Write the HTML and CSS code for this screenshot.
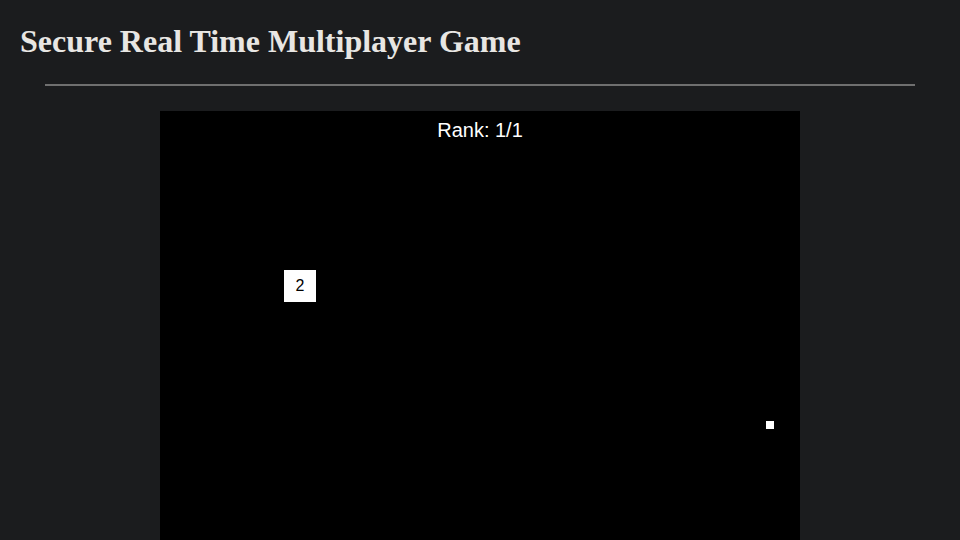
FILE: index.html
```html
<!DOCTYPE html>
<html lang="en">
<head>
<meta charset="utf-8">
<title>Secure Real Time Multiplayer Game</title>
<link rel="stylesheet" href="styles.css">
</head>
<body>
  <h1 class="title">Secure Real Time Multiplayer Game</h1>
  <hr class="divider">
  <main class="game">
    <div class="rank">Rank: 1/1</div>
    <div class="player" style="left:124px;top:159px;">2</div>
    <div class="collectible" style="left:606px;top:310px;"></div>
  </main>
</body>
</html>
```
FILE: styles.css
```css
html, body {
  margin: 0;
  padding: 0;
  background: #1b1c1e;
  overflow: hidden;
}

body {
  display: flex;
  flex-direction: column;
  height: 540px;
}

.title {
  margin: 23px 0 0 20px;
  font-family: "Liberation Serif", "Times New Roman", serif;
  font-size: 32px;
  font-weight: bold;
  line-height: 36px;
  color: #e8e6e3;
}

.divider {
  margin: 25px 45px 0 45px;
  border: 0;
  border-top: 2px solid #6f6f6f;
  height: 0;
}

.game {
  position: relative;
  flex: none;
  width: 640px;
  height: 480px;
  margin: 25px auto 0;
  background: #000;
}

.rank {
  padding-top: 6px;
  text-align: center;
  font-family: "Liberation Sans", Arial, sans-serif;
  font-size: 20px;
  line-height: 26px;
  color: #ffffff;
}

.player {
  position: absolute;
  width: 32px;
  height: 32px;
  background: #fff;
  color: #000;
  font-family: "Liberation Sans", Arial, sans-serif;
  font-size: 16px;
  line-height: 32px;
  text-align: center;
}

.collectible {
  position: absolute;
  width: 8px;
  height: 8px;
  background: #fff;
}
```
